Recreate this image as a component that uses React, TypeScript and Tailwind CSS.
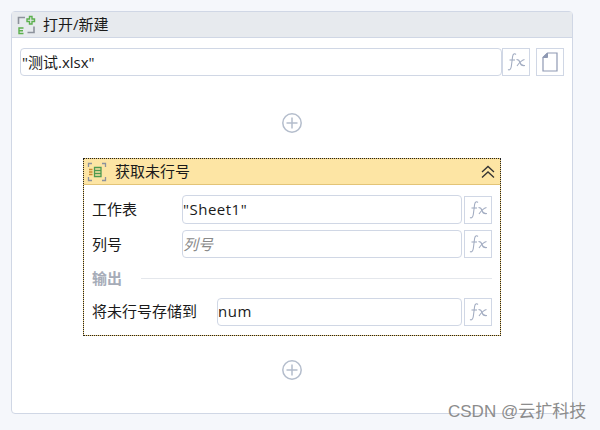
const font = "font-['Open_Sans','Noto_Sans_CJK_SC',sans-serif]"

const FxButton = ({ className = "" }: { className?: string }) => (
    <div className={`flex h-[28px] w-[28px] shrink-0 items-center justify-center border border-[#d0d7e5] bg-white ${className}`}>
        <svg width="22" height="20" viewBox="0 0 22 20" fill="none" stroke="#a3adc2" strokeWidth="1.1">
            <path d="M11 2.5C9.5 1 8 2 7.6 4.5L6.3 14.5C6 17 4.5 18.5 3 17.5" />
            <path d="M4.5 8H10" />
            <path d="M11.5 7.5C13.5 7.5 14.5 8.5 15 10.5C15.5 12.5 17 14 20 13.5" />
            <path d="M19.5 7.5C17.5 8 14 11 12 14" />
        </svg>
    </div>
)

const PlusButton = () => (
    <div className="flex justify-center">
        <svg width="22" height="22" viewBox="0 0 22 22" fill="none" stroke="#b4bdcc" strokeWidth="1.5">
            <circle cx="11" cy="11" r="9.2" />
            <path d="M11 5.5V16.5M5.5 11H16.5" />
        </svg>
    </div>
)

const OpenIcon = () => (
    <svg width="20" height="20" viewBox="0 0 20 20" fill="none">
        <path d="M2.5 9V2.5H9M11.5 17.5H18V11.5" stroke="#8d929c" strokeWidth="1.6" />
        <path d="M13.5 1.5H16V4H18.5V6.5H16V9H13.5V6.5H11V4H13.5Z" stroke="#5cb04e" strokeWidth="1.4" />
        <path d="M7.5 13H3V18.5H7.5M3 15.7H7" stroke="#5cb04e" strokeWidth="1.4" />
    </svg>
)

const RowIcon = () => (
    <svg width="20" height="20" viewBox="0 0 20 20" fill="none">
        <path d="M1.5 5V1.5H5M15 1.5H18.5V5M18.5 15V18.5H15M5 18.5H1.5V15" stroke="#8d929c" strokeWidth="1.3" />
        <path d="M7.5 5.5H14V14.5H7.5ZM7.5 8.5H14M7.5 11.5H14" stroke="#4f9a50" strokeWidth="1.3" />
        <path d="M2 7.5H5.5M2 10H5.5M2 12.5H5.5" stroke="#c98a32" strokeWidth="1.3" />
    </svg>
)

const Field = ({ label, value, placeholder, inputWidth, height = "h-[29px]" }: { label: string; value?: string; placeholder?: string; inputWidth: string; height?: string }) => (
    <div className="flex items-center">
        <span className="flex-1 whitespace-nowrap text-[15px] text-[#1a1a1a]">{label}</span>
        <div className={`flex items-center rounded-sm border border-[#d0d7e5] bg-white text-[15px] ${height} ${inputWidth}`}>
            {value ? <span className="tracking-[0.5px] text-[#1a1a1a]">{value}</span> : <span className="italic text-[#8a8a8a]">{placeholder}</span>}
        </div>
        <FxButton className="ml-[2px]" />
    </div>
)

export default function App() {
    return (
        <div className={`relative h-[430px] w-[600px] overflow-hidden bg-[#f5f7fb] pl-[11px] pt-[11px] ${font}`}>
            <div className="h-[403px] w-[562px] rounded-sm border border-[#d0d7e5] bg-white">
                <div className="flex h-[26px] items-center gap-[7px] border-b border-[#d0d7e5] bg-[#e7eaee] pl-[4px] text-[15px] text-[#1a1a1a]">
                    <OpenIcon />
                    <span>打开/新建</span>
                </div>

                <div className="flex pl-[8px] pr-[8px] pt-[10px]">
                    <div className="flex h-[28px] w-[482px] items-center rounded-sm border border-[#d0d7e5] pl-[1px] text-[15px] text-[#1a1a1a]">"测试.xlsx"</div>
                    <FxButton />
                    <div className="ml-[6px] flex h-[28px] w-[28px] items-center justify-center border border-[#d0d7e5]">
                        <svg width="16" height="20" viewBox="0 0 16 20" fill="none">
                            <path d="M1 5.5L5.5 1H15V19H1Z" stroke="#8f99b3" strokeWidth="1.2" />
                            <path d="M1 5.5L5.5 1V5.5Z" fill="#8f99b3" stroke="#8f99b3" />
                        </svg>
                    </div>
                </div>

                <div className="pt-[36px]"><PlusButton /></div>

                <div className="ml-[71px] mt-[24px] h-[178px] w-[418px] border border-dotted border-[#222] bg-[#e8c878]">
                    <div className="flex h-[26px] items-center justify-between border-b border-[#e3c477] bg-[#fde5a4] pl-[3px] pr-[4px]">
                        <div className="flex items-center gap-[8px] text-[15px] leading-[20px] text-[#1a1a1a]">
                            <RowIcon />
                            <span className="pb-[2px]">获取未行号</span>
                        </div>
                        <svg width="16" height="16" viewBox="0 0 16 16" fill="none" stroke="#333" strokeWidth="1.3">
                            <path d="M2 8L8 2.5L14 8M2 13.5L8 8L14 13.5" />
                        </svg>
                    </div>
                    <div className="flex h-[150px] flex-col bg-white pl-[8px] pr-[8px] pt-[10px]">
                        <div className="flex flex-col gap-[6px]">
                            <Field label="工作表" value={'"Sheet1"'} inputWidth="w-[280px]" />
                            <Field label="列号" placeholder="列号" inputWidth="w-[280px]" height="h-[28px]" />
                        </div>
                        <div className="mt-[9px] flex items-center gap-[19px]">
                            <span className="text-[15px] font-bold text-[#a6acb8]">输出</span>
                            <div className="h-px flex-1 bg-[#e4e7ec]" />
                        </div>
                        <div className="mt-[8px]">
                            <Field label="将未行号存储到" value="num" inputWidth="w-[245px]" height="h-[28px]" />
                        </div>
                    </div>
                </div>

                <div className="pt-[23px]"><PlusButton /></div>
            </div>

            <span className="absolute left-[448px] top-[401px] font-['Liberation_Sans','Noto_Sans_CJK_SC',sans-serif] text-[17px] leading-[22px] text-[#8c8c8c]">CSDN @云扩科技</span>
        </div>
    )
}
